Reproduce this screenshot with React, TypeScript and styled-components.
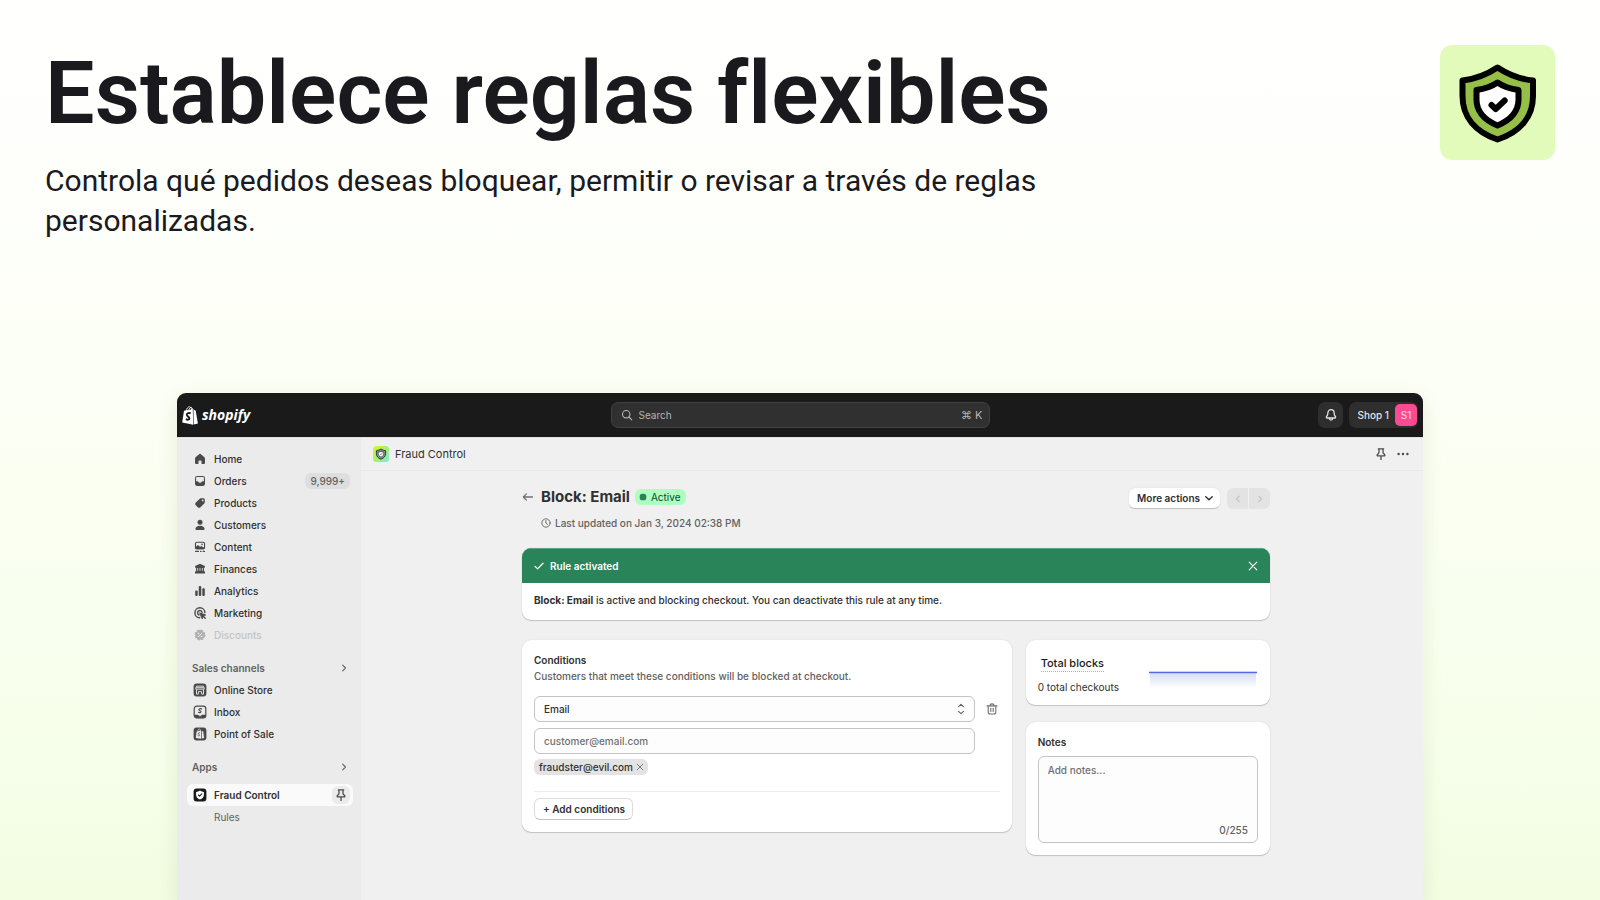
import React from "react";
import styled, { createGlobalStyle } from "styled-components";

const GlobalStyle = createGlobalStyle`
  *, *::before, *::after { box-sizing: border-box; }
  body { margin: 0; background: #fff; }
  h1, h2, p, ul { margin: 0; padding: 0; }
  ul { list-style: none; }
  button, input, select, textarea { font: inherit; color: inherit; margin: 0; }
  button { border: 0; padding: 0; background: none; cursor: pointer; }
  a { color: inherit; text-decoration: none; }
  svg { display: block; flex: none; }
`;

const Page = styled.div`
  min-height: 100vh;
  display: flex;
  flex-direction: column;
  overflow: hidden;
  background: linear-gradient(180deg, #ffffff 0%, #fefffa 25%, #fafff1 60%, #f6ffea 85%, #f2fde2 100%);
  font-family: Inter, "Liberation Sans", sans-serif;
`;

/* ---------- promotional heading ---------- */

const Hero = styled.header`
  display: flex;
  justify-content: space-between;
  align-items: flex-start;
  padding: 45px 45px 152px;
  color: #1a1a1e;
  font-family: Roboto, "Liberation Sans", sans-serif;
`;

const HeroText = styled.div`
  max-width: 1060px;
`;

const HeroTitle = styled.h1`
  font-size: 88px;
  line-height: 96px;
  font-weight: 600;
  font-variant-ligatures: none;
`;

const HeroLead = styled.p`
  margin-top: 20px;
  font-size: 30px;
  line-height: 40px;
`;

const AppTile = styled.div`
  display: grid;
  place-items: center;
  width: 115px;
  height: 115px;
  border-radius: 12px;
  background: #e3fbba;
`;

/* ---------- admin window ---------- */

const AdminWindow = styled.section`
  flex: 1;
  display: flex;
  flex-direction: column;
  margin: 0 177px;
  border-radius: 9px 9px 0 0;
  overflow: hidden;
  background: #f0f0f0;
  box-shadow: 0 6px 20px rgba(90, 110, 40, 0.12);
  color: #303030;
  font-size: 10px;
  line-height: 16px;
`;

const TopBar = styled.div`
  display: grid;
  grid-template-columns: 1fr minmax(120px, 379px) 1fr;
  align-items: center;
  height: 44px;
  padding: 0 5px;
  background: #1a1a1a;
  color: #e3e3e3;
`;

const Brand = styled.a`
  display: flex;
  align-items: center;
  gap: 4px;
  color: #fff;
  font: italic 700 14px/20px "Open Sans", "Noto Sans", sans-serif;
`;

const SearchBox = styled.label`
  display: flex;
  align-items: center;
  gap: 6px;
  height: 26px;
  padding: 0 6px 0 9px;
  border: 1px solid #414141;
  border-radius: 7px;
  background: #303030;
  color: #b5b5b5;
`;

const SearchInput = styled.input`
  flex: 1;
  min-width: 0;
  border: 0;
  padding: 0;
  outline: 0;
  background: none;
  &::placeholder { color: #b5b5b5; opacity: 1; }
`;

const Shortcut = styled.span`
  font-size: 11px;
`;

const TopActions = styled.div`
  display: flex;
  justify-content: flex-end;
  gap: 6px;
`;

const DarkButton = styled.button<{ $square?: boolean }>`
  display: flex;
  align-items: center;
  justify-content: center;
  gap: 6px;
  height: 26px;
  width: ${(p) => (p.$square ? "25px" : "auto")};
  padding: ${(p) => (p.$square ? "0" : "0 1px 0 8px")};
  border-radius: 7px;
  background: #2e2e2e;
  font-weight: 500;
`;

const Avatar = styled.span`
  display: grid;
  place-items: center;
  width: 22px;
  height: 22px;
  border-radius: 5px;
  background: #fd4b92;
  color: #ffd9e8;
  font-weight: 400;
`;

const Body = styled.div`
  flex: 1;
  display: flex;
`;

/* ---------- sidebar ---------- */

const Sidebar = styled.nav`
  flex: none;
  width: 184px;
  padding: 10px 8px 0 10px;
  border-top: 1px solid #e0e0e0;
  background: #ebebeb;
`;

const NavLink = styled.a<{ $active?: boolean; $faded?: boolean }>`
  display: flex;
  align-items: center;
  gap: 7px;
  height: 22px;
  padding: 0 3px 0 6px;
  border-radius: 6px;
  background: ${(p) => (p.$active ? "#fafafa" : "none")};
  color: ${(p) => (p.$faded ? "#c4c4c4" : "#303030")};
  font-weight: ${(p) => (p.$active ? 600 : 500)};
  svg { color: ${(p) => (p.$faded ? "#b0b0b0" : "#4a4a4a")}; }
`;

const SubLink = styled(NavLink)`
  padding-left: 27px;
  color: #616161;
  font-weight: 400;
`;

const NavLabel = styled.span`
  flex: 1;
`;

const CountBadge = styled.span`
  padding: 0 5px;
  border-radius: 6px;
  background: #dedede;
  color: #616161;
  font-weight: 500;
`;

const SectionButton = styled.button`
  display: flex;
  align-items: center;
  justify-content: space-between;
  width: 100%;
  height: 22px;
  margin: 11px 0 0;
  padding: 0 4px 0 5px;
  color: #616161;
  font-weight: 600;
`;

const AppList = styled.ul`
  margin-top: 6px;
`;

const PinBubble = styled.span`
  display: grid;
  place-items: center;
  width: 18px;
  height: 18px;
  border-radius: 6px;
  background: #ebebeb;
`;

/* ---------- main column ---------- */

const Main = styled.main`
  flex: 1;
  min-width: 0;
`;

const AppHeader = styled.div`
  display: flex;
  align-items: center;
  gap: 6px;
  height: 34px;
  padding: 0 13px 0 12px;
  border-top: 1px solid #e0e0e0;
  border-bottom: 1px solid #e9e9e9;
`;

const AppName = styled.span`
  flex: 1;
  font-size: 11px;
`;

const HeaderActions = styled.div`
  display: flex;
  align-items: center;
  gap: 8px;
  color: #4a4a4a;
`;

const Content = styled.div`
  max-width: 756px;
  margin: 0 auto;
  padding: 16px 0 32px 8px;
`;

const TitleBar = styled.div`
  display: flex;
  justify-content: space-between;
  align-items: flex-start;
`;

const TitleGrid = styled.div`
  display: grid;
  grid-template-columns: 11px auto;
  column-gap: 8px;
  row-gap: 8px;
  align-items: center;
`;

const TitleLine = styled.div`
  display: flex;
  align-items: center;
  gap: 5px;
`;

const RuleTitle = styled.h2`
  font-size: 15px;
  line-height: 20px;
  font-weight: 700;
`;

const StatusBadge = styled.span`
  display: flex;
  align-items: center;
  gap: 4px;
  height: 16px;
  padding: 0 6px 0 4px;
  border-radius: 6px;
  background: #affebf;
  color: #014b40;
`;

const Updated = styled.p`
  grid-column: 2;
  display: flex;
  align-items: center;
  gap: 4px;
  color: #616161;
  font-weight: 500;
`;

const Actions = styled.div`
  display: flex;
  gap: 7px;
  padding-top: 1px;
`;

const Button = styled.button<{ $outlined?: boolean }>`
  display: flex;
  align-items: center;
  gap: 4px;
  height: ${(p) => (p.$outlined ? "22px" : "21px")};
  padding: 0 ${(p) => (p.$outlined ? "7px" : "6px")} 0 8px;
  border: ${(p) => (p.$outlined ? "1px solid #dcdcdc" : "0")};
  border-bottom: 1px solid #c4c4c4;
  border-radius: 6px;
  background: #fff;
  box-shadow: ${(p) => (p.$outlined ? "none" : "0 0 1px rgba(0, 0, 0, 0.2)")};
  font-weight: 600;
`;

const Pager = styled.div`
  display: flex;
  gap: 1px;
  border-radius: 6px;
  overflow: hidden;
`;

const PagerButton = styled.button`
  display: grid;
  place-items: center;
  width: 21px;
  height: 21px;
  background: #e3e3e3;
  color: #c2c2c2;
`;

const Card = styled.section`
  padding: 12px;
  border-radius: 9px;
  background: #fff;
  box-shadow: 0 1px 1px rgba(0, 0, 0, 0.18), 0 0 1px rgba(0, 0, 0, 0.2);
`;

const Banner = styled(Card)`
  margin-top: 17px;
  padding: 0;
  overflow: hidden;
`;

const BannerHead = styled.div`
  display: flex;
  align-items: center;
  gap: 6px;
  height: 35px;
  padding: 0 12px;
  border-top: 1px solid #5fa583;
  background: #29845a;
  color: #fff;
  font-weight: 600;
`;

const BannerTitle = styled.span`
  flex: 1;
`;

const BannerText = styled.p`
  padding: 9px 12px 12px;
  font-weight: 500;
`;

const Columns = styled.div`
  display: grid;
  grid-template-columns: 489fr 244fr;
  gap: 14px;
  align-items: start;
  margin-top: 20px;
`;

const Stack = styled.div`
  display: flex;
  flex-direction: column;
  gap: 17px;
`;

const CardTitle = styled.h2`
  font-size: 10px;
  line-height: 16px;
  font-weight: 600;
`;

const Muted = styled.p`
  color: #616161;
  font-weight: 500;
`;

const Condition = styled.div`
  display: grid;
  grid-template-columns: 1fr 16px;
  column-gap: 9px;
  row-gap: 6px;
  align-items: center;
  margin-top: 12px;
`;

const SelectWrap = styled.div`
  display: grid;
  align-items: center;
  color: #616161;
  & > * { grid-area: 1 / 1; }
  svg { justify-self: end; margin-right: 8px; pointer-events: none; }
`;

const Select = styled.select`
  appearance: none;
  width: 100%;
  height: 26px;
  padding: 0 9px;
  border: 1px solid #c4c4c4;
  border-radius: 6px;
  background: #fdfdfd;
  color: #303030;
  font-weight: 500;
`;

const TextInput = styled.input`
  width: 100%;
  height: 26px;
  padding: 0 9px;
  border: 1px solid #c4c4c4;
  border-radius: 6px;
  background: #fdfdfd;
  font-weight: 500;
  &::placeholder { color: #707070; opacity: 1; }
`;

const IconButton = styled.button`
  justify-self: center;
  color: #707070;
`;

const Tag = styled.span`
  display: inline-flex;
  align-items: center;
  gap: 2px;
  height: 16px;
  margin-top: 5px;
  padding: 0 3px 0 5px;
  border-radius: 6px;
  background: #e3e3e3;
  font-weight: 500;
`;

const CardFoot = styled.div`
  margin-top: 16px;
  padding-top: 6px;
  border-top: 1px solid #ebebeb;
`;

const Metric = styled(Card)`
  display: flex;
  justify-content: space-between;
  align-items: center;
  padding: 15px 13px 10px 12px;
`;

const MetricTitle = styled.h2`
  display: inline-block;
  margin: 0 3px;
  border-bottom: 1px dotted #a9b4bd;
  color: #1a1a1a;
  font-size: 11px;
  line-height: 16px;
  font-weight: 500;
`;

const MetricNote = styled.p`
  margin-top: 7px;
`;

const NotesLabel = styled.label`
  display: block;
  font-weight: 600;
`;

const NotesField = styled.div`
  display: grid;
  margin-top: 6px;
  & > * { grid-area: 1 / 1; }
`;

const NotesArea = styled.textarea`
  width: 100%;
  height: 87px;
  padding: 5px 9px;
  border: 1px solid #c4c4c4;
  border-radius: 6px;
  background: #fdfdfd;
  font-weight: 500;
  resize: none;
  &::placeholder { color: #707070; opacity: 1; }
`;

const Counter = styled.span`
  align-self: end;
  justify-self: end;
  padding: 0 10px 5px 0;
  color: #616161;
  font-weight: 500;
`;

/* ---------- icons ---------- */

type IconProps = { size?: number; children: React.ReactNode; box?: number };

const Solid = ({ size = 14, box = 14, children }: IconProps) => (
  <svg width={size} height={size} viewBox={`0 0 ${box} ${box}`} fill="currentColor" aria-hidden="true">
    {children}
  </svg>
);

const Line = ({ size = 12, box = 12, children }: IconProps) => (
  <svg
    width={size}
    height={size}
    viewBox={`0 0 ${box} ${box}`}
    fill="none"
    stroke="currentColor"
    strokeWidth="1.1"
    strokeLinecap="round"
    strokeLinejoin="round"
    aria-hidden="true"
  >
    {children}
  </svg>
);

const HomeIcon = () => (
  <Solid>
    <path d="M6.1 2.2a1.4 1.4 0 0 1 1.8 0l3.3 2.9c.5.4.8 1 .8 1.7v4A1.2 1.2 0 0 1 10.800 12H9.200a.7.7 0 0 1-.7-.7V9.600a1 1 0 0 0-1-1h-1a1 1 0 0 0-1 1v1.700a.7.7 0 0 1-.7.7H3.200A1.200 1.200 0 0 1 2 10.800v-4c0-.7.3-1.300.8-1.700z" />
  </Solid>
);

const OrdersIcon = () => (
  <Solid>
    <path
      fillRule="evenodd"
      d="M4.300 2h5.400A2.300 2.300 0 0 1 12 4.300v5.400A2.300 2.300 0 0 1 9.700 12H4.300A2.300 2.300 0 0 1 2 9.700V4.300A2.300 2.300 0 0 1 4.300 2zm0 1.100c-.7 0-1.200.5-1.200 1.200v3h1.400c.4 0 .7.2.9.500l.3.500c.1.300.4.400.7.400h1.200c.3 0 .6-.1.7-.4l.3-.5c.2-.3.500-.5.900-.5h1.400v-3c0-.7-.5-1.200-1.200-1.200z"
    />
  </Solid>
);

const ProductsIcon = () => (
  <Solid>
    <path
      fillRule="evenodd"
      d="M8 2.300h2.400c.8 0 1.400.6 1.400 1.400v2.200c0 .6-.2 1.100-.6 1.500l-3.700 3.800c-.8.8-2 .8-2.800 0L2.800 9.300c-.8-.8-.8-2 0-2.800l3.700-3.600c.4-.4.900-.6 1.500-.6zM9.700 5.300a.9.900 0 1 0 0-1.800.9.900 0 0 0 0 1.800z"
    />
  </Solid>
);

const CustomersIcon = () => (
  <Solid>
    <circle cx="7" cy="4.200" r="2.500" />
    <path d="M2.400 11c0-1.900 1.800-3.300 4.600-3.300s4.600 1.400 4.600 3.300c0 .5-.4.900-.9.900H3.300c-.5 0-.9-.4-.9-.9z" />
  </Solid>
);

const ContentIcon = () => (
  <Solid>
    <path
      fillRule="evenodd"
      d="M3.700 1.700h6.600A1.800 1.800 0 0 1 12.100 3.500v4.200A1.800 1.800 0 0 1 10.300 9.500H3.700A1.800 1.800 0 0 1 1.900 7.700V3.500A1.800 1.800 0 0 1 3.700 1.700zm0 1.100c-.4 0-.7.300-.7.700v2.900l1.200-1c.4-.3.900-.3 1.300 0l1.200 1c.3.200.7.200 1 0 .4-.3.900-.3 1.300 0l2 1V3.500c0-.4-.3-.7-.7-.7zM9 5.200a.8.800 0 1 0 0-1.600.8.800 0 0 0 0 1.600z"
    />
    <rect x="2" y="10.700" width="4" height="1.300" rx=".6" />
    <rect x="7" y="10.700" width="1.600" height="1.300" rx=".6" />
    <rect x="9.600" y="10.700" width="2.400" height="1.300" rx=".6" />
  </Solid>
);

const FinancesIcon = () => (
  <Solid>
    <path
      fillRule="evenodd"
      d="M6.500 2.100a1.300 1.300 0 0 1 1 0l3.900 1.700c.4.200.6.500.6.900 0 .6-.4 1-1 1v3.200c.6.200 1 .7 1 1.300v.8c0 .3-.3.600-.6.600H2.600a.6.600 0 0 1-.6-.6v-.8c0-.6.4-1.100 1-1.300V5.700c-.6 0-1-.4-1-1 0-.4.200-.7.600-.9zM4.300 6v2.700h.8V6zm2.300 0v2.700h.8V6zM8.900 6v2.700h.8V6z"
    />
  </Solid>
);

const AnalyticsIcon = () => (
  <Solid>
    <rect x="2.200" y="6.400" width="2.500" height="5.500" rx="1" />
    <rect x="5.750" y="2" width="2.500" height="9.900" rx="1" />
    <rect x="9.300" y="4.200" width="2.500" height="7.700" rx="1" />
  </Solid>
);

const MarketingIcon = () => (
  <svg width="14" height="14" viewBox="0 0 14 14" fill="none" stroke="currentColor" strokeWidth="1.400" strokeLinecap="round" aria-hidden="true">
    <path d="M6.600 11.800A5 5 0 1 1 11.900 6.600" />
    <path d="M6 9a2.300 2.300 0 1 1 3.100-2.700" />
    <path d="M7 7l5.600 2-2.200 1.100L9.300 12.400z" fill="currentColor" strokeWidth="1" strokeLinejoin="round" />
    <path d="M10.500 10.500l1.700 1.700" />
  </svg>
);

const DiscountsIcon = () => (
  <Solid>
    <circle cx="7" cy="7" r="4.700" />
    <circle cx="7" cy="7" r="4.800" fill="none" stroke="currentColor" strokeWidth="1.300" strokeDasharray="2.400 1.370" />
    <path d="M5.200 8.800l3.600-3.600" stroke="#ebebeb" strokeWidth=".9" strokeLinecap="round" />
    <circle cx="5.500" cy="5.500" r=".8" fill="#ebebeb" />
    <circle cx="8.500" cy="8.500" r=".8" fill="#ebebeb" />
  </Solid>
);

const StoreIcon = () => (
  <Solid>
    <rect x=".6" y=".6" width="12.800" height="12.800" rx="3" />
    <g fill="none" stroke="#ebebeb" strokeWidth=".9" strokeLinejoin="round">
      <path d="M3.500 3.200h7l.8 2.300v.7H2.700v-.7z" />
      <path d="M3.500 6.500v4.600h1.900V8.600h3.200v2.500h1.900V6.500M3.200 4.700h7.600" />
    </g>
  </Solid>
);

const InboxIcon = () => (
  <svg width="14" height="14" viewBox="0 0 14 14" fill="none" stroke="currentColor" strokeLinecap="round" strokeLinejoin="round" aria-hidden="true">
    <rect x="1.200" y="1.200" width="11.600" height="11.600" rx="2.600" strokeWidth="1.200" />
    <path d="M1.500 10h3.300L7 11.500l2.200-1.500h3.300v1.300a1.500 1.500 0 0 1-1.500 1.500H3a1.500 1.500 0 0 1-1.500-1.500z" fill="currentColor" strokeWidth=".5" />
    <path d="M8.500 3.900C7.400 3.400 6 3.700 6 4.700c0 1.100 2 .9 1.900 2.100-.1 1-1.500 1.100-2.400.5" strokeWidth="1.200" />
  </svg>
);

const PosIcon = () => (
  <Solid>
    <rect x=".6" y=".6" width="12.800" height="12.800" rx="3" />
    <path d="M3.600 4.500l4.500-1v8.200l-5.300-.8zM8.800 3.900l1.400.6.900 6.500-2.300.6z" fill="#ebebeb" />
    <path d="M4.700 4.200C4.900 2.800 5.800 2 6.700 2.200c.7.200.9.800.9 1.500" fill="none" stroke="#ebebeb" strokeWidth=".7" />
    <path d="M6.900 5.900c-.8-.4-1.600 0-1.600.6 0 .8 1.200.8 1.100 1.700-.1.700-.9.800-1.600.4" fill="none" stroke="currentColor" strokeWidth=".9" />
  </Solid>
);

const FraudIcon = () => (
  <Solid>
    <rect x=".6" y=".6" width="12.800" height="12.800" rx="3" fill="#1a1a1a" />
    <path d="M7 2.600c1.200.9 2.400 1.300 3.900 1.400v2.700c0 2.300-1.500 3.900-3.900 4.800-2.400-.9-3.900-2.500-3.900-4.800V4c1.500-.1 2.700-.5 3.900-1.400z" fill="#fff" />
    <path d="M5.400 7l1.200 1.100 2.200-2.200" fill="none" stroke="#1a1a1a" strokeWidth="1.100" strokeLinecap="round" strokeLinejoin="round" />
  </Solid>
);

const PinIcon = () => (
  <Line size={14} box={14}>
    <path
      strokeWidth="1.300"
      d="M4.300 1.800h5.400M5 1.800v3.500c0 .5-.2.900-.5 1.200L3.300 7.600c-.5.500-.1 1.300.5 1.300h6.400c.6 0 1-.8.5-1.300L9.500 6.500c-.3-.3-.5-.7-.5-1.200V1.800M7 9v3.400"
    />
  </Line>
);

const ChevronRight = () => (
  <Line size={10} box={10}>
    <path d="M3.700 2.200L6.500 5 3.700 7.800" />
  </Line>
);

const ChevronLeft = () => (
  <Line size={10} box={10}>
    <path d="M6.300 2.200L3.500 5l2.800 2.800" />
  </Line>
);

const ShieldLogo = () => (
  <svg width="78" height="80" viewBox="0 0 78 80" role="img" aria-label="Fraud Control">
    <g stroke="#000" strokeWidth="6" strokeLinejoin="round">
      <path
        d="M38.500 4.500c10.500 7 22 11.500 35.500 13v15.500c0 21-13 36-35.500 43.500C16.500 69 3.500 54 3.500 33V17.500c13-1.500 24.500-6 35-13z"
        fill="#95bf47"
      />
      <path d="M38.500 19.500c6.500 4.500 13.500 6.500 21 7.500v9.500c0 12-8 20.500-21 26-13-5.500-21-14-21-26V27c7.500-1 14.500-3 21-7.500z" fill="#fff" />
    </g>
    <path d="M32.500 42l4.200 4 9-8.500" fill="none" stroke="#000" strokeWidth="6" strokeLinecap="round" strokeLinejoin="round" />
  </svg>
);

const MiniShield = () => (
  <svg width="16" height="16" viewBox="0 0 16 16" aria-hidden="true">
    <defs>
      <linearGradient id="tile" x1="0" y1="0" x2="1" y2="1">
        <stop offset="0" stopColor="#d2f72a" />
        <stop offset=".5" stopColor="#a5f06a" />
        <stop offset="1" stopColor="#7fe6ea" />
      </linearGradient>
    </defs>
    <rect width="16" height="16" rx="3.500" fill="url(#tile)" />
    <path d="M8 3.100c1.400.9 2.900 1.400 4.600 1.600v2.900c0 2.700-1.700 4.600-4.600 5.600-2.900-1-4.600-2.900-4.600-5.600V4.700c1.700-.2 3.200-.7 4.600-1.600z" fill="#8a9a92" stroke="#30363d" strokeWidth="1" />
    <path d="M8 5.300c.9.600 1.800.8 2.800.9v1.500c0 1.700-1 2.700-2.800 3.500-1.800-.8-2.800-1.800-2.800-3.500V6.200c1-.1 1.900-.3 2.800-.9z" fill="#fff" stroke="#30363d" strokeWidth=".8" />
    <path d="M7.100 8l.7.700 1.400-1.400" fill="none" stroke="#30363d" strokeWidth=".8" />
  </svg>
);

const BagLogo = () => (
  <svg width="16" height="19" viewBox="0 0 16 19" aria-hidden="true">
    <path d="M2 4.700l8.800-1.500.4 15.500-11-2.100z" fill="#fff" />
    <path d="M11.400 3.200l2.300 1.600 2.200 12.700-4.200 1.100z" fill="#fff" />
    <path d="M4.200 5C4.600 2.600 6 .7 7.500.8c1.300.1 2 1.400 2.100 3.200M6.600 4.500C7 2.600 8.200 1.300 9.300 1.500c.9.200 1.300 1 1.400 2.200" fill="none" stroke="#fff" strokeWidth=".9" />
    <path d="M8.700 7.400c-1.700-.8-3.900-.2-3.900 1.400 0 1.800 2.700 1.900 2.600 3.600-.1 1.500-1.900 1.600-3.500.7" fill="none" stroke="#1a1a1a" strokeWidth="1.900" />
  </svg>
);

/* ---------- data ---------- */

const mainLinks = [
  { label: "Home", Icon: HomeIcon },
  { label: "Orders", Icon: OrdersIcon, count: "9,999+" },
  { label: "Products", Icon: ProductsIcon },
  { label: "Customers", Icon: CustomersIcon },
  { label: "Content", Icon: ContentIcon },
  { label: "Finances", Icon: FinancesIcon },
  { label: "Analytics", Icon: AnalyticsIcon },
  { label: "Marketing", Icon: MarketingIcon },
  { label: "Discounts", Icon: DiscountsIcon, faded: true },
];

const channelLinks = [
  { label: "Online Store", Icon: StoreIcon },
  { label: "Inbox", Icon: InboxIcon },
  { label: "Point of Sale", Icon: PosIcon },
];

/* ---------- page ---------- */

export default function App() {
  return (
    <Page>
      <GlobalStyle />
      <Hero>
        <HeroText>
          <HeroTitle>Establece reglas flexibles</HeroTitle>
          <HeroLead>
            Controla qué pedidos deseas bloquear, permitir o revisar a través de reglas personalizadas.
          </HeroLead>
        </HeroText>
        <AppTile>
          <ShieldLogo />
        </AppTile>
      </Hero>

      <AdminWindow>
        <TopBar>
          <Brand href="#">
            <BagLogo />
            shopify
          </Brand>
          <SearchBox>
            <Line>
              <circle cx="5.200" cy="5.200" r="3.700" />
              <path d="M8 8l2.800 2.800" />
            </Line>
            <SearchInput type="search" placeholder="Search" aria-label="Search" />
            <Shortcut>⌘ K</Shortcut>
          </SearchBox>
          <TopActions>
            <DarkButton $square aria-label="Notifications">
              <Line size={14} box={14}>
                <path
                  strokeWidth="1.300"
                  d="M7 1.700c-1.900 0-3.100 1.400-3.100 3.200 0 2-.5 2.700-1.300 3.600-.5.600-.2 1.500.6 1.500h7.600c.8 0 1.100-.9.600-1.500-.8-.9-1.300-1.600-1.300-3.600C10.100 3.100 8.900 1.700 7 1.700zM5.200 10.200c.1 1.100.8 1.900 1.800 1.900s1.700-.8 1.800-1.900"
                />
              </Line>
            </DarkButton>
            <DarkButton>
              Shop 1<Avatar>S1</Avatar>
            </DarkButton>
          </TopActions>
        </TopBar>

        <Body>
          <Sidebar aria-label="Main">
            <ul>
              {mainLinks.map(({ label, Icon, count, faded }) => (
                <li key={label}>
                  <NavLink href="#" $faded={faded}>
                    <Icon />
                    <NavLabel>{label}</NavLabel>
                    {count && <CountBadge>{count}</CountBadge>}
                  </NavLink>
                </li>
              ))}
            </ul>
            <SectionButton>
              Sales channels
              <ChevronRight />
            </SectionButton>
            <ul>
              {channelLinks.map(({ label, Icon }) => (
                <li key={label}>
                  <NavLink href="#">
                    <Icon />
                    <NavLabel>{label}</NavLabel>
                  </NavLink>
                </li>
              ))}
            </ul>
            <SectionButton>
              Apps
              <ChevronRight />
            </SectionButton>
            <AppList>
              <li>
                <NavLink href="#" $active>
                  <FraudIcon />
                  <NavLabel>Fraud Control</NavLabel>
                  <PinBubble>
                    <PinIcon />
                  </PinBubble>
                </NavLink>
              </li>
              <li>
                <SubLink href="#">Rules</SubLink>
              </li>
            </AppList>
          </Sidebar>

          <Main>
            <AppHeader>
              <MiniShield />
              <AppName>Fraud Control</AppName>
              <HeaderActions>
                <button aria-label="Pin app">
                  <PinIcon />
                </button>
                <button aria-label="More options">
                  <Solid>
                    <circle cx="2.600" cy="7" r="1.200" />
                    <circle cx="7" cy="7" r="1.200" />
                    <circle cx="11.400" cy="7" r="1.200" />
                  </Solid>
                </button>
              </HeaderActions>
            </AppHeader>

            <Content>
              <TitleBar>
                <TitleGrid>
                  <IconButton aria-label="Back">
                    <Line>
                      <path strokeWidth="1.300" d="M10.500 6H1.300M4.400 2.900L1.300 6l3.100 3.100" />
                    </Line>
                  </IconButton>
                  <TitleLine>
                    <RuleTitle>Block: Email</RuleTitle>
                    <StatusBadge>
                      <Solid size={8} box={8}>
                        <rect x=".7" y=".7" width="6.600" height="6.600" rx="2.600" fill="#29845a" />
                      </Solid>
                      Active
                    </StatusBadge>
                  </TitleLine>
                  <Updated>
                    <Line size={10}>
                      <circle cx="6" cy="6" r="5" />
                      <path d="M5.900 3v3.200l1.900 1.500" />
                    </Line>
                    Last updated on Jan 3, 2024 02:38 PM
                  </Updated>
                </TitleGrid>
                <Actions>
                  <Button>
                    More actions
                    <Line size={10} box={10}>
                      <path strokeWidth="1.400" d="M1.800 3.700L5 6.800l3.200-3.100" />
                    </Line>
                  </Button>
                  <Pager>
                    <PagerButton aria-label="Previous rule" disabled>
                      <ChevronLeft />
                    </PagerButton>
                    <PagerButton aria-label="Next rule" disabled>
                      <ChevronRight />
                    </PagerButton>
                  </Pager>
                </Actions>
              </TitleBar>

              <Banner>
                <BannerHead>
                  <Line size={10} box={10}>
                    <path strokeWidth="1.300" d="M1 5.400l2.600 2.500L9 2.300" />
                  </Line>
                  <BannerTitle>Rule activated</BannerTitle>
                  <button aria-label="Dismiss">
                    <Line size={10} box={10}>
                      <path strokeWidth="1.200" d="M1.200 1.200l7.600 7.600M8.800 1.200L1.200 8.800" />
                    </Line>
                  </button>
                </BannerHead>
                <BannerText>
                  <b>Block: Email</b> is active and blocking checkout. You can deactivate this rule at any time.
                </BannerText>
              </Banner>

              <Columns>
                <Card>
                  <CardTitle>Conditions</CardTitle>
                  <Muted>Customers that meet these conditions will be blocked at checkout.</Muted>
                  <Condition>
                    <SelectWrap>
                      <Select aria-label="Condition type" defaultValue="email">
                        <option value="email">Email</option>
                      </Select>
                      <Line>
                        <path d="M3.500 3.700L6 1.300l2.500 2.400M3.500 8.300L6 10.700l2.500-2.400" />
                      </Line>
                    </SelectWrap>
                    <IconButton aria-label="Delete condition">
                      <Line>
                        <path d="M1 2.900h10M4 2.800c0-1.200.8-1.900 2-1.900s2 .7 2 1.900M2.200 3.100v5.900c0 1.300.7 2 2 2h3.600c1.300 0 2-.7 2-2V3.100M4.800 5.200v3.300M7.200 5.200v3.300" />
                      </Line>
                    </IconButton>
                    <TextInput type="email" placeholder="customer@email.com" aria-label="Customer email" />
                  </Condition>
                  <Tag>
                    fraudster@evil.com
                    <IconButton aria-label="Remove fraudster@evil.com">
                      <Line size={10} box={10}>
                        <path strokeWidth=".9" d="M2.200 2.200l5.600 5.600M7.800 2.200L2.200 7.800" />
                      </Line>
                    </IconButton>
                  </Tag>
                  <CardFoot>
                    <Button $outlined>+ Add conditions</Button>
                  </CardFoot>
                </Card>

                <Stack>
                  <Metric>
                    <div>
                      <MetricTitle>Total blocks</MetricTitle>
                      <MetricNote>0 total checkouts</MetricNote>
                    </div>
                    <svg width="108" height="26" viewBox="0 0 108 26" role="img" aria-label="Total blocks over time">
                      <defs>
                        <linearGradient id="area" x1="0" y1="0" x2="0" y2="1">
                          <stop offset="0" stopColor="#d5ddf3" />
                          <stop offset="1" stopColor="#ffffff" />
                        </linearGradient>
                      </defs>
                      <rect x="1" y="11" width="106" height="15" fill="url(#area)" />
                      <rect y="9.700" width="108" height="1.500" fill="#5568e8" />
                    </svg>
                  </Metric>
                  <Card>
                    <NotesLabel htmlFor="notes">Notes</NotesLabel>
                    <NotesField>
                      <NotesArea id="notes" placeholder="Add notes..." />
                      <Counter>0/255</Counter>
                    </NotesField>
                  </Card>
                </Stack>
              </Columns>
            </Content>
          </Main>
        </Body>
      </AdminWindow>
    </Page>
  );
}
